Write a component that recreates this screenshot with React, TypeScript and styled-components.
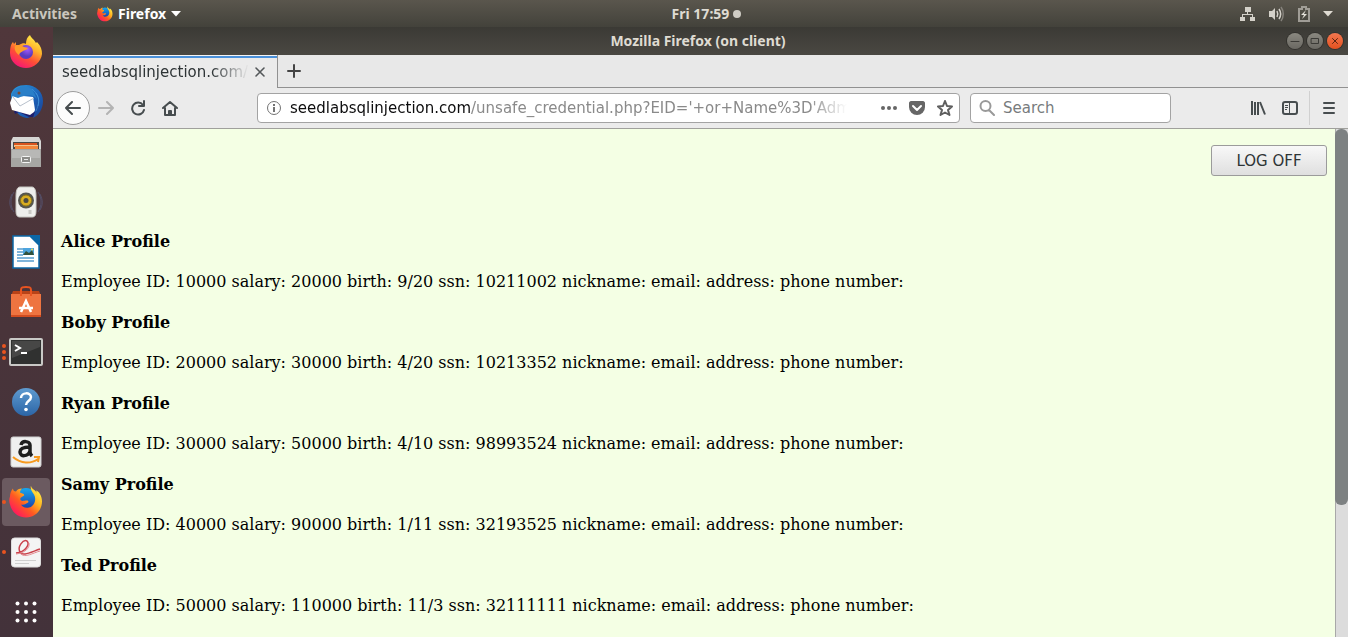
import React from "react";
import styled, { createGlobalStyle } from "styled-components";

const GlobalStyle = createGlobalStyle`
  * { box-sizing: border-box; }
  html, body, #root { height: 100%; }
  body { margin: 0; overflow: hidden; font-family: "DejaVu Sans", sans-serif; }
  button { font: inherit; color: inherit; border: 0; padding: 0; background: none; }
  svg { display: block; flex: none; }
`;

const Desktop = styled.div`
  height: 100vh;
  display: flex;
  flex-direction: column;
  background: #4a363b;
`;

const TopBar = styled.header`
  height: 27px;
  flex: none;
  display: grid;
  grid-template-columns: 165fr auto 148fr;
  align-items: center;
  padding: 0 15px 0 12px;
  background: linear-gradient(#5a564d, #43423b);
  color: #dfdbd2;
  font: 700 14px/20px "Noto Sans", sans-serif;
`;

const BarGroup = styled.div<{ $end?: boolean; $gap: number }>`
  display: flex;
  align-items: center;
  justify-content: ${(p) => (p.$end ? "flex-end" : "flex-start")};
  gap: ${(p) => p.$gap}px;
`;

const BarButton = styled.button<{ $color?: string }>`
  display: flex;
  align-items: center;
  gap: 5px;
  color: ${(p) => p.$color ?? "#dfdbd2"};
`;

const Dot = styled.span`
  width: 8px;
  height: 8px;
  border-radius: 50%;
  background: #cfccc4;
`;

const Workspace = styled.div`
  flex: 1;
  min-height: 0;
  display: flex;
`;

const Launcher = styled.nav`
  width: 53px;
  flex: none;
  display: flex;
  flex-direction: column;
  align-items: flex-start;
  gap: 2px;
  padding: 1px 0 0 2px;
  background: linear-gradient(#50373b, #49343a 50%, #43323a);
`;

const LaunchButton = styled.button<{ $active?: boolean }>`
  position: relative;
  width: 48px;
  height: 48px;
  flex: none;
  display: flex;
  align-items: center;
  justify-content: center;
  border-radius: 4px;
  background: ${(p) => (p.$active ? "#6b5a60" : "transparent")};
  &:last-child { margin-top: 10px; }
`;

const Running = styled.span`
  position: absolute;
  left: 0;
  top: 0;
  height: 100%;
  display: flex;
  flex-direction: column;
  justify-content: center;
  gap: 2px;
  & > i { width: 4px; height: 4px; border-radius: 50%; background: #e95420; }
`;

const Window = styled.main`
  flex: 1;
  min-width: 0;
  display: flex;
  flex-direction: column;
  background: #ebebeb;
`;

const TitleBar = styled.div`
  height: 28px;
  flex: none;
  display: grid;
  grid-template-columns: 1fr auto 1fr;
  align-items: center;
  padding-right: 5px;
  background: linear-gradient(#3b3a35, #4a4842);
  color: #dfdbd2;
`;

const WindowTitle = styled.h1`
  grid-column: 2;
  margin: 0;
  font: 700 14px/20px "Noto Sans", sans-serif;
`;

const WindowButton = styled.button<{ $close?: boolean }>`
  width: 16px;
  height: 16px;
  border-radius: 50%;
  background: ${(p) => (p.$close ? "linear-gradient(#f47750, #e2511f)" : "linear-gradient(#8a8880, #6a6862)")};
  box-shadow: 0 0 0 1px #33322e;
`;

const TabStrip = styled.div`
  height: 33px;
  flex: none;
  display: flex;
  background: #e8e8e8;
`;

const Tab = styled.div`
  width: 225px;
  display: flex;
  align-items: center;
  padding: 0 10px 0 9px;
  gap: 4px;
  border-right: 1px solid #919191;
  background: linear-gradient(#f4f4f4 1px, #4a90d9 1px, #4a90d9 3px, #ebebeb 3px);
  color: #2e3436;
  font-size: 15px;
  line-height: 20px;
`;

const TabLabel = styled.span`
  flex: 1;
  overflow: hidden;
  white-space: nowrap;
  mask-image: linear-gradient(to right, #000 80%, transparent);
`;

const TabRest = styled.div`
  flex: 1;
  display: flex;
  align-items: center;
  padding-left: 8px;
  border-bottom: 1px solid #919191;
  color: #444;
`;

const Toolbar = styled.div`
  height: 41px;
  flex: none;
  display: flex;
  align-items: center;
  padding: 0 12px 0 3px;
  border-bottom: 1px solid #a0a09c;
  color: #474d4f;
`;

const ToolGroup = styled.div<{ $gap?: number }>`
  display: flex;
  align-items: center;
  gap: ${(p) => p.$gap ?? 16}px;
`;

const BackButton = styled.button`
  width: 34px;
  height: 34px;
  display: flex;
  align-items: center;
  justify-content: center;
  border: 1px solid #9c9c9c;
  border-radius: 50%;
  background: #fcfcfc;
`;

const NavButtons = styled(ToolGroup)`
  width: 201px;
  flex: none;
  & > ${BackButton} { margin-right: -8px; }
`;

const Field = styled.div<{ $width?: number }>`
  height: 30px;
  min-width: 0;
  flex: ${(p) => (p.$width ? `0 0 ${p.$width}px` : "1 1 0")};
  display: flex;
  align-items: center;
  gap: 8px;
  padding: 0 6px 0 8px;
  border: 1px solid #a3a3a3;
  border-radius: 4px;
  background: #fff;
  font-size: 15px;
  line-height: 20px;
`;

const Address = styled.div`
  flex: 1;
  min-width: 0;
  overflow: hidden;
  white-space: nowrap;
  color: #8a8a8a;
  mask-image: linear-gradient(to right, #000 calc(100% - 64px), transparent calc(100% - 26px));
  & > b { font-weight: 400; color: #0c0c0d; }
`;

const SearchInput = styled.input`
  flex: 1;
  min-width: 0;
  border: 0;
  outline: 0;
  padding: 0;
  background: none;
  font: 15px/20px "DejaVu Sans", sans-serif;
  &::placeholder { color: #777b7d; opacity: 1; }
`;

const Fields = styled.div`
  flex: 1;
  min-width: 0;
  display: flex;
  gap: 10px;
`;

const RightTools = styled(ToolGroup)`
  margin-left: 79px;
`;

const MenuCell = styled.div`
  height: 34px;
  display: flex;
  align-items: center;
  padding-left: 12px;
  margin-left: -5px;
  border-left: 1px solid #d0d0d0;
`;

const Viewport = styled.div`
  flex: 1;
  min-height: 0;
  display: flex;
  background: #f4ffe4;
`;

const Page = styled.article`
  flex: 1;
  min-width: 0;
  overflow: hidden;
  padding: 16px 8px 0;
  color: #000;
  font-family: "DejaVu Serif", serif;
  font-size: 16px;
`;

const LogOff = styled.button`
  display: block;
  width: 116px;
  height: 31px;
  margin: 0 0 56px auto;
  border: 1px solid #9b9b9b;
  border-radius: 3px;
  background: linear-gradient(#f8f8f8, #dfdfdf);
  color: #2e3436;
  font: 15px/20px "DejaVu Sans", sans-serif;
`;

const ProfileTitle = styled.h4`
  margin: 0 0 21px;
  font-size: 16px;
  line-height: 19px;
`;

const ProfileText = styled.p`
  margin: 0 0 21px;
  line-height: 20px;
`;

const ScrollTrack = styled.div`
  width: 13px;
  flex: none;
  background: linear-gradient(to right, #a8a8a8 1px, #dcdcdc 1px);
`;

const ScrollThumb = styled.div`
  height: 74%;
  border-radius: 6px;
  background: #7d8182;
`;

type Employee = { name: string; id: number; salary: number; birth: string; ssn: string };

const employees: Employee[] = [
  { name: "Alice", id: 10000, salary: 20000, birth: "9/20", ssn: "10211002" },
  { name: "Boby", id: 20000, salary: 30000, birth: "4/20", ssn: "10213352" },
  { name: "Ryan", id: 30000, salary: 50000, birth: "4/10", ssn: "98993524" },
  { name: "Samy", id: 40000, salary: 90000, birth: "1/11", ssn: "32193525" },
  { name: "Ted", id: 50000, salary: 110000, birth: "11/3", ssn: "32111111" },
];

const FirefoxOld = ({ size, id }: { size: number; id: string }) => (
  <svg width={size} height={size} viewBox="0 0 34 34">
    <defs>
      <linearGradient id={`${id}f`} x1="0.9" y1="0.1" x2="0.15" y2="0.9">
        <stop offset="0" stopColor="#fff14a" />
        <stop offset=".35" stopColor="#ffb01e" />
        <stop offset=".62" stopColor="#ff5a22" />
        <stop offset="1" stopColor="#ff1462" />
      </linearGradient>
      <linearGradient id={`${id}b`} x1="0" y1="0" x2="0" y2="1">
        <stop offset="0" stopColor="#16a8f0" />
        <stop offset="1" stopColor="#1b2f9c" />
      </linearGradient>
    </defs>
    <circle cx="17" cy="15" r="12" fill={`url(#${id}b)`} />
    <path fill={`url(#${id}f)`} d="M22 .5c-1 4 1 6 3 9 3 5 0 12-5 13-4 1-7-1-8-3 3 1 5-1 7-2 1-1 0-2-1-2-3 0-4 1-6 0-1-1-1-2 0-3l3-2c1-2-3-2-4-3 0-2 1-3 2-4-3 0-5 1-6 3-2 0-3-1-3-3-2 2-3 5-3 8-1 3-1 5 0 8 2 8 8 13 16 13 9 0 16-7 16-16 0-6-3-10-6-11l1 3C27 5 22 4 22 .5Z" />
  </svg>
);

const FirefoxNew = () => (
  <svg width="34" height="34" viewBox="0 0 34 34">
    <defs>
      <linearGradient id="fn" x1=".8" y1="0" x2=".25" y2="1">
        <stop offset="0" stopColor="#fff44f" />
        <stop offset=".35" stopColor="#ffb52b" />
        <stop offset=".65" stopColor="#ff4f35" />
        <stop offset="1" stopColor="#f4117c" />
      </linearGradient>
      <radialGradient id="fp" cx=".6" cy=".3">
        <stop offset="0" stopColor="#a55bff" />
        <stop offset="1" stopColor="#5a3bc0" />
      </radialGradient>
    </defs>
    <path fill="url(#fn)" d="M21 0c1 3 4 4 6 8l1-1c4 4 5 8 5 12-1 8-8 14-16 14S1 27 1 18c0-6 1-9 3-11l1 2 2-2v3h3c3-2 6-2 7-1 0-4 1-7 4-9Z" />
    <circle cx="17" cy="17" r="7" fill="url(#fp)" />
    <path fill="#ff9d2a" d="M6 11c3-2 6-1 9 1l4 1c-1 2-4 2-5 3s-3 1-4 4c-3-2-5-5-4-9Z" />
  </svg>
);

const Thunderbird = () => (
  <svg width="36" height="36" viewBox="0 0 36 36">
    <defs>
      <linearGradient id="tb" x1="0" y1="0" x2="1" y2="1">
        <stop offset="0" stopColor="#2a9be0" />
        <stop offset=".6" stopColor="#1c5fb5" />
        <stop offset="1" stopColor="#1b3f91" />
      </linearGradient>
    </defs>
    <path fill="url(#tb)" d="M3 10C5 4 10 1 18 1c10 0 17 7 17 16 0 8-4 14-10 17l1-3-6 3C11 34 3 25 3 10Z" />
    <path fill="#1d1f6e" d="m6 27 1 3 4-2 10 5h4l2-5Z" />
    <path fill="#fff" d="m2 19 3-8 20 2 2 13-1 2-4 3L4 26Z" />
    <path fill="none" stroke="#b8c1cc" strokeWidth="1" d="m5 13 7 9 14-8" />
    <path fill="#2a7fc8" d="M6 7c4-5 12-6 18-2l5 10c-3-3-5-4-8-4-4 0-8 2-11 3l-6-2c0-2 1-4 2-5Z" />
    <circle cx="11" cy="9" r="1.500" fill="#7b4a35" />
    <path fill="none" stroke="#57b4f0" d="M24 5c6 5 8 10 6 17M28 9c4 6 3 11 0 18" opacity=".4" />
  </svg>
);

const Files = () => (
  <svg width="32" height="32" viewBox="0 0 32 32">
    <path fill="#d6d6d4" d="M3 1h26l2 4v26H1V5Z" />
    <path fill="#4a4844" d="M3 6h26v7H3z" />
    <path fill="#d9541e" d="M4 7h23v2H4z" />
    <path fill="#f3c48d" d="M4 9h24v2H4z" />
    <path fill="#f2873b" d="M5 10h23v3H5z" />
    <path fill="#a6a6a3" d="M1 13h30v18H1z" />
    <path fill="#b8b8b6" d="M2 14h28v8H2z" />
    <rect x="11.5" y="20.5" width="9" height="6" rx="1" fill="#8b8b88" stroke="#f5f5f5" />
    <path stroke="#e8e8e8" d="M14 23.500h4" />
  </svg>
);

const Rhythmbox = () => (
  <svg width="36" height="36" viewBox="0 0 36 36">
    <path fill="none" stroke="#5b668f" d="M6 8c-4 6-4 14 0 20M30 8c4 6 4 14 0 20M4 10c-3 6-3 11 0 16M32 10c3 6 3 11 0 16" opacity=".5" />
    <path fill="#eeeeec" stroke="#c7c7c2" d="M12 3h12c3 0 4 4 4 9v15c0 4-1 6-4 6H12c-3 0-4-2-4-6V12c0-5 1-9 4-9Z" />
    <circle cx="18" cy="16.500" r="8" fill="#56564f" />
    <circle cx="18" cy="16.500" r="5.500" fill="#d8ad22" stroke="#8c7416" />
    <circle cx="18" cy="16.500" r="2.500" fill="#4b4a43" />
    <path stroke="#c9c9c5" strokeWidth="3" d="M22 26v4" />
  </svg>
);

const Writer = () => (
  <svg width="28" height="34" viewBox="0 0 28 34">
    <path fill="#fff" stroke="#0b67a6" strokeWidth="1.500" d="M1 1h17l9 9v23H1z" />
    <path fill="#0b67a6" d="M17 0h11v11Z" />
    <path stroke="#7fb4da" strokeWidth="2" d="M5 14h6M5 17h6M5 20h6M5 23h17M5 26h17" />
    <path fill="#4da4de" d="M11 13h11v7H11z" />
    <path fill="#32513b" d="m11 20 3-4 3 2 3-3 2 5Z" />
    <circle cx="20" cy="14.500" r="1" fill="#f3df54" />
  </svg>
);

const Software = () => (
  <svg width="32" height="34" viewBox="0 0 32 34">
    <path fill="#b94318" d="M3 6h26l2 5H1Z" />
    <path fill="#ee7440" d="M1 9h30v22H1z" />
    <path fill="#d24d20" d="M1 30h30v2H1z" />
    <path fill="none" stroke="#e95420" strokeWidth="2" d="M11 11V5c0-3 2-3 5-3s5 0 5 3v6" />
    <path fill="none" stroke="#fff" strokeWidth="2.500" d="m11 27 5-11 5 11M9 23h14" />
  </svg>
);

const Terminal = () => (
  <svg width="34" height="28" viewBox="0 0 34 28">
    <rect x="1" y="1" width="32" height="26" rx="1" fill="#303130" stroke="#c9c9c6" strokeWidth="2" />
    <path fill="#565755" d="M3 3h28v6L3 20Z" opacity=".6" />
    <path fill="none" stroke="#fff" strokeWidth="2" d="m6 7 5 3-5 3M12 15h6" />
  </svg>
);

const Help = () => (
  <svg width="30" height="30" viewBox="0 0 30 30">
    <defs>
      <linearGradient id="hp" x1="0" y1="0" x2="0" y2="1">
        <stop offset="0" stopColor="#5f9bd0" />
        <stop offset="1" stopColor="#2c65a6" />
      </linearGradient>
    </defs>
    <circle cx="15" cy="15" r="14" fill="url(#hp)" />
    <path fill="none" stroke="#fff" strokeWidth="2.500" d="M10 11c0-6 10-6 10-1 0 4-5 4-5 8" />
    <circle cx="15" cy="22.500" r="1.800" fill="#fff" />
  </svg>
);

const Amazon = () => (
  <svg width="32" height="32" viewBox="0 0 32 32">
    <rect x="1" y="1" width="30" height="30" rx="2" fill="#efefef" stroke="#d0d0d0" />
    <path fill="none" stroke="#1e1e1e" strokeWidth="3.500" d="M11 9c1-5 9-4 9 0v7c0 2 1 3 2 4M20 11c-7 0-10 2-10 5 0 5 8 5 10-1" />
    <path fill="none" stroke="#f79a1f" strokeWidth="2" d="M3 21c8 7 18 7 25 2M24 21l5 0-1 5" />
  </svg>
);

const Reader = () => (
  <svg width="30" height="31" viewBox="0 0 30 31">
    <rect x=".5" y="1" width="29" height="29" rx="3" fill="#f4f4f4" stroke="#ddd" />
    <path fill="none" stroke="#c9414b" strokeWidth="1.500" d="M5 16C15 15 19 7 16 4c-4-2-10 6-7 11 2 5 11 0 20-3" />
    <path fill="none" stroke="#e38a90" d="M5 17c9-1 14-6 13-11M10 17c4 4 12-1 19-3" />
    <path stroke="#cfcfcf" d="M4 23.500h21M4 26.500h14" />
  </svg>
);

const AppGrid = () => (
  <svg width="22" height="22" viewBox="0 0 22 22" fill="#fff">
    {[2.5, 11, 19.5].map((y) => [2.5, 11, 19.5].map((x) => <circle key={`${x}-${y}`} cx={x} cy={y} r="2" />))}
  </svg>
);

const Caret = () => (
  <svg width="10" height="6" viewBox="0 0 10 6" fill="currentColor"><path d="M0 0h10L5 5.500Z" /></svg>
);

const Line = ({ d, size = 16, color = "currentColor", width = 2 }: { d: string; size?: number; color?: string; width?: number }) => (
  <svg width={size} height={size} viewBox={`0 0 ${size} ${size}`} fill="none" stroke={color} strokeWidth={width} strokeLinecap="round" strokeLinejoin="round">
    <path d={d} />
  </svg>
);

const launcher: { label: string; icon: React.ReactNode; windows?: number; active?: boolean }[] = [
  { label: "Firefox", icon: <FirefoxNew /> },
  { label: "Thunderbird", icon: <Thunderbird /> },
  { label: "Files", icon: <Files /> },
  { label: "Rhythmbox", icon: <Rhythmbox /> },
  { label: "LibreOffice Writer", icon: <Writer /> },
  { label: "Ubuntu Software", icon: <Software /> },
  { label: "Terminal", icon: <Terminal />, windows: 3 },
  { label: "Help", icon: <Help /> },
  { label: "Amazon", icon: <Amazon /> },
  { label: "Firefox on client", icon: <FirefoxOld size={34} id="dock" />, windows: 1, active: true },
  { label: "Document Viewer", icon: <Reader />, windows: 1 },
  { label: "Show Applications", icon: <AppGrid /> },
];

export default function App() {
  return (
    <Desktop>
      <GlobalStyle />
      <TopBar>
        <BarGroup $gap={20}>
          <BarButton $color="#cac7be">Activities</BarButton>
          <BarButton $color="#fff"><FirefoxOld size={16} id="bar" />Firefox<Caret /></BarButton>
        </BarGroup>
        <BarGroup $gap={4}>Fri 17:59<Dot /></BarGroup>
        <BarGroup $end $gap={13}>
          <svg width="16" height="16" viewBox="0 0 16 16" fill="#d4d1c9">
            <path d="M5 1h6v5H5zM0 11h5v4H0zM10 11h5v4h-5zM7 6h1v2h5v3h-1V9H3v2H2V8h5z" />
          </svg>
          <svg width="16" height="16" viewBox="0 0 16 16" fill="#d4d1c9">
            <path d="M0 5h3l3-3v12l-3-3H0z" />
            <path fill="none" stroke="#d4d1c9" strokeWidth="1.500" d="M8 5c1 2 1 4 0 6M10 3c2 3 2 7 0 10" />
            <path fill="none" stroke="#85827b" strokeWidth="1.500" d="M12 1c3 4 3 10 0 14" />
          </svg>
          <svg width="12" height="16" viewBox="0 0 12 16">
            <path fill="none" stroke="#a09d96" strokeWidth="2" d="M4 1h4v2h3v12H1V3h3z" />
            <path fill="#e4e1d9" d="M8 4 3 9h3l-2 4 5-5H6z" />
          </svg>
          <Caret />
        </BarGroup>
      </TopBar>

      <Workspace>
        <Launcher aria-label="Applications">
          {launcher.map((item) => (
            <LaunchButton key={item.label} aria-label={item.label} $active={item.active}>
              {item.windows && <Running>{Array.from({ length: item.windows }, (_, i) => <i key={i} />)}</Running>}
              {item.icon}
            </LaunchButton>
          ))}
        </Launcher>

        <Window>
          <TitleBar>
            <WindowTitle>Mozilla Firefox (on client)</WindowTitle>
            <BarGroup $end $gap={4}>
              <WindowButton aria-label="Minimize"><Line color="#3b3a36" width={1} d="M4 8.500h8" /></WindowButton>
              <WindowButton aria-label="Maximize"><Line color="#3b3a36" width={1} d="M4.500 5.500h7v5h-7z" /></WindowButton>
              <WindowButton $close aria-label="Close"><Line color="#5c2410" width={1} d="m5.500 5.500 5 5m0-5-5 5" /></WindowButton>
            </BarGroup>
          </TitleBar>

          <TabStrip>
            <Tab>
              <TabLabel>seedlabsqlinjection.com/</TabLabel>
              <button aria-label="Close tab"><Line size={14} width={1.6} color="#54585a" d="m3 3 8 8m0-8-8 8" /></button>
            </Tab>
            <TabRest>
              <button aria-label="New tab"><Line d="M8 2v12M2 8h12" /></button>
            </TabRest>
          </TabStrip>

          <Toolbar>
            <NavButtons>
              <BackButton aria-label="Back"><Line d="M15 8H1m6-6L1 8l6 6" /></BackButton>
              <button aria-label="Forward"><Line color="#b3b3b3" d="M1 8h14M9 2l6 6-6 6" /></button>
              <button aria-label="Reload"><Line d="M13 5a6 6 0 1 0 1 5M14 1v5H9" /></button>
              <button aria-label="Home"><Line d="M1 8l7-6 7 6M3 8v7h10V8M7 14v-3h2v3" /></button>
            </NavButtons>
            <Fields>
              <Field>
                <svg width="16" height="16" viewBox="0 0 16 16" fill="none" stroke="#737373">
                  <circle cx="8" cy="8" r="6.500" />
                  <path strokeWidth="2" d="M8 7v5M8 4v2" />
                </svg>
                <Address><b>seedlabsqlinjection.com</b>/unsafe_credential.php?EID='+or+Name%3D'Admin'</Address>
                <ToolGroup $gap={12}>
                  <button aria-label="Page actions">
                    <svg width="16" height="16" viewBox="0 0 16 16" fill="#666"><circle cx="2" cy="8" r="2" /><circle cx="8" cy="8" r="2" /><circle cx="14" cy="8" r="2" /></svg>
                  </button>
                  <button aria-label="Save to Pocket">
                    <svg width="16" height="16" viewBox="0 0 16 16">
                      <path fill="#666" d="M2 1h12c1 0 2 1 2 2v4a8 8 0 0 1-16 0V3c0-1 1-2 2-2Z" />
                      <path fill="none" stroke="#fff" strokeWidth="2" strokeLinecap="round" strokeLinejoin="round" d="m4 6 4 4 4-4" />
                    </svg>
                  </button>
                  <button aria-label="Bookmark">
                    <Line color="#5e5e5e" d="m8 1 2 5 5 .500-4 3.500 1.500 5L8 12.500 3.500 15 5 10 1 6.500 6 6Z" />
                  </button>
                </ToolGroup>
              </Field>
              <Field as="label" $width={201}>
                <Line color="#999" d="M6.500 1a5 5 0 1 0 0 10 5 5 0 0 0 0-10M10 10l5 5" />
                <SearchInput aria-label="Search" placeholder="Search" />
              </Field>
            </Fields>
            <RightTools>
              <button aria-label="Library">
                <svg width="16" height="16" viewBox="0 0 16 16" stroke="currentColor" strokeWidth="2"><path d="M2 1v14M5 2v13M8 2v13M10 2l5 12.500" /></svg>
              </button>
              <button aria-label="Sidebars">
                <svg width="16" height="16" viewBox="0 0 16 16" fill="none" stroke="currentColor">
                  <rect x="1" y="2" width="14" height="12" rx="2" strokeWidth="2" />
                  <path d="M7.500 2v12M3 5.500h3M3 7.500h3M3 9.500h2" />
                </svg>
              </button>
              <MenuCell>
                <button aria-label="Menu"><Line size={14} d="M2 2h10M2 7h10M2 12h10" /></button>
              </MenuCell>
            </RightTools>
          </Toolbar>

          <Viewport>
            <Page>
              <LogOff>LOG OFF</LogOff>
              {employees.map((e) => (
                <section key={e.name}>
                  <ProfileTitle>{e.name} Profile</ProfileTitle>
                  <ProfileText>
                    Employee ID: {e.id} salary: {e.salary} birth: {e.birth} ssn: {e.ssn} nickname: email: address: phone number:
                  </ProfileText>
                </section>
              ))}
            </Page>
            <ScrollTrack><ScrollThumb /></ScrollTrack>
          </Viewport>
        </Window>
      </Workspace>
    </Desktop>
  );
}
